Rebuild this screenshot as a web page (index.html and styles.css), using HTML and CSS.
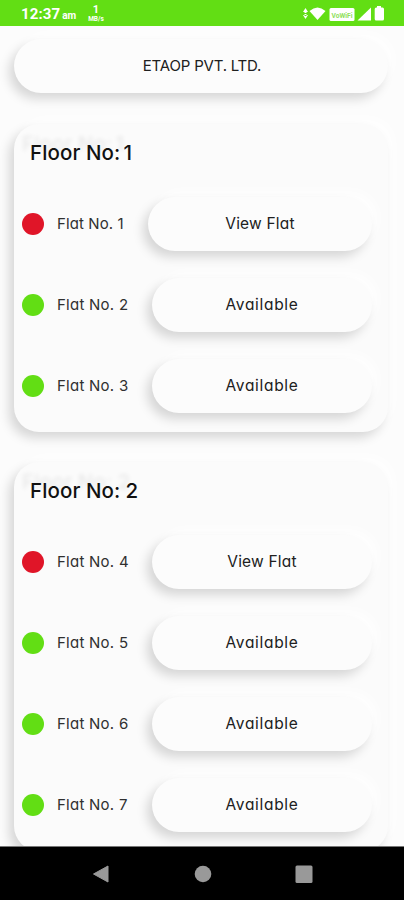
FILE: index.html
```
<!DOCTYPE html>
<html lang="en">
<head>
<meta charset="utf-8">
<title>ETAOP PVT. LTD.</title>
<link rel="stylesheet" href="styles.css">
</head>
<body>
<div class="phone">
  <header class="status">
    <span class="clock">12:37</span><span class="ampm">am</span>
    <span class="speed"><b>1</b><small>MB/s</small></span>
    <svg class="signals" width="84" height="18" viewBox="0 0 84 18" fill="#fff">
      <path d="M0 7 2.500 3 5 7ZM0 10 2.500 14 5 10ZM1.500 6h2v2h-2ZM1.500 9h2v2h-2Z"/>
      <path d="M6.500 6Q14.500-1 22.500 6L14.500 15Z"/>
      <rect x="26.500" y="3" width="25" height="13" rx="1.500"/>
      <text x="28.500" y="13" class="vowifi" textLength="21" lengthAdjust="spacingAndGlyphs">VoWiFi</text>
      <path d="M68 2.500V15.500H54.500Z"/>
      <path d="M74 1h4V2.500h1.500Q81 2.500 81 4V14Q81 15.500 79.500 15.500h-6.300Q71.700 15.500 71.700 14V4Q71.700 2.500 73.200 2.500H74Z"/>
    </svg>
  </header>
  <main class="content">
    <div class="pill company">ETAOP PVT. LTD.</div>
    <section class="card">
      <h2 class="title">Floor No:<span class="num one">1</span></h2>
      <div class="row"><i class="dot taken"></i><span class="label narrow">Flat No. 1</span><div class="pill action view">View Flat</div></div>
      <div class="row"><i class="dot"></i><span class="label">Flat No. 2</span><div class="pill action">Available</div></div>
      <div class="row"><i class="dot"></i><span class="label">Flat No. 3</span><div class="pill action">Available</div></div>
    </section>
    <section class="card">
      <h2 class="title">Floor No:<span class="num">2</span></h2>
      <div class="row"><i class="dot taken"></i><span class="label">Flat No. 4</span><div class="pill action view">View Flat</div></div>
      <div class="row"><i class="dot"></i><span class="label">Flat No. 5</span><div class="pill action">Available</div></div>
      <div class="row"><i class="dot"></i><span class="label">Flat No. 6</span><div class="pill action">Available</div></div>
      <div class="row"><i class="dot"></i><span class="label">Flat No. 7</span><div class="pill action">Available</div></div>
    </section>
  </main>
  <nav class="nav">
    <svg width="18" height="20" viewBox="0 0 18 20"><path d="M1.500 10 16 2V18Z" fill="#999" stroke="#999" stroke-linejoin="round"/></svg>
    <svg width="18" height="20" viewBox="0 0 18 20"><circle cx="9" cy="10" r="8.300" fill="#999"/></svg>
    <svg width="18" height="20" viewBox="0 0 18 20"><rect x=".5" y="1.500" width="17" height="17.500" rx="1.500" fill="#999"/></svg>
  </nav>
</div>
</body>
</html>
```
FILE: styles.css
```
* { box-sizing: border-box; }
body {
  margin: 0;
  font-family: Inter, "Open Sans", sans-serif;
  font-feature-settings: "cv11";
  color: #202020;
  background: #fcfcfc;
}
.phone {
  width: 404px;
  height: 900px;
  display: flex;
  flex-direction: column;
  overflow: hidden;
}
.status {
  flex: none;
  height: 26px;
  background: #62de14;
  color: #fff;
  display: flex;
  align-items: center;
  padding: 1px 17px 0 21px;
  font-family: Roboto, sans-serif;
}
.clock { font-size: 15px; font-weight: 700; letter-spacing: .1px; }
.ampm { font-size: 10px; font-weight: 700; margin: 3px 0 0 2px; width: 26px; }
.speed {
  display: flex;
  flex-direction: column;
  align-items: center;
}
.speed b { font-size: 11px; line-height: 11px; }
.speed small { font-size: 6.500px; line-height: 8px; font-weight: 700; }
.signals { margin-left: auto; }
.vowifi { font: 700 8px Roboto, sans-serif; fill: #8fe05c; }
.content {
  flex: 1;
  min-height: 0;
  overflow: hidden;
  padding: 13px 16px 0 14px;
}
.pill {
  height: 54px;
  border-radius: 27px;
  background: #fcfcfc;
  display: flex;
  align-items: center;
  justify-content: center;
  padding-bottom: 1px;
  font-size: 15px;
  box-shadow: -5px 6px 11px rgba(0,0,0,.15), 6px -6px 12px rgba(255,255,255,.8);
}
.company { padding-left: 2px; letter-spacing: -.2px; margin-bottom: 31px; }
.card {
  border-radius: 25px;
  background: #fbfbfb;
  padding: 10px 16px 19px 8px;
  margin-bottom: 30px;
  box-shadow: -5px 6px 11px rgba(0,0,0,.15), 6px -6px 12px rgba(255,255,255,.8);
}
.title {
  margin: 0 0 27px 8px;
  height: 36px;
  line-height: 37px;
  font-size: 20.500px;
  font-weight: 500;
  letter-spacing: .1px;
  color: #111;
  white-space: nowrap;
  text-shadow: -8px -9px 4px rgba(0,0,0,.08);
}
.num { margin-left: 5px; }
.num.one { margin-left: 3px; }
.row {
  height: 54px;
  display: flex;
  align-items: center;
}
.row + .row { margin-top: 27px; }
.dot {
  flex: none;
  width: 22px;
  height: 22px;
  border-radius: 50%;
  background: #62de14;
}
.dot.taken { background: #e01528; }
.label {
  flex: none;
  width: 95px;
  margin-left: 13px;
  padding-bottom: 1px;
  font-size: 15px;
  letter-spacing: .25px;
  color: #303030;
  white-space: nowrap;
}
.label.narrow { width: 91px; letter-spacing: .1px; }
.action { flex: 1; font-size: 15.500px; letter-spacing: .7px; }
.action.view { letter-spacing: .2px; }
.nav {
  flex: none;
  height: 54px;
  border-top: 1px solid #777;
  background: #000;
  display: flex;
  align-items: center;
  justify-content: space-between;
  padding: 0 91px 0 92px;
}
```
